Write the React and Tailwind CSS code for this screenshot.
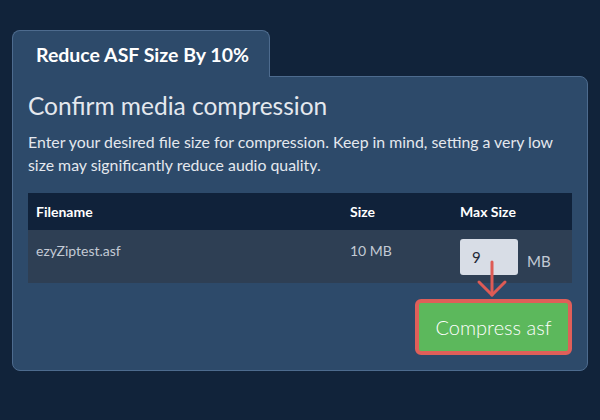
import React from "react";

const font = { fontFamily: "Lato, 'Noto Sans', sans-serif" };

const DownArrow = () => (
  <svg
    className="absolute left-[17px] top-[21px] overflow-visible"
    width="30"
    height="38"
    viewBox="0 0 30 38"
    fill="none"
    stroke="#de5b55"
    strokeWidth="3"
    strokeLinecap="round"
    strokeLinejoin="round"
  >
    <path d="M15 2 V35" />
    <path d="M2 22 L15 35 L28 22" />
  </svg>
);

export default function App() {
  return (
    <div className="min-h-screen w-[600px] h-[420px] bg-[#11233a] px-3 pt-[30px]" style={font}>
      <div className="relative z-10 -mb-px h-[47px] w-[258px] rounded-t-lg border border-b-0 border-[#4d6b8e] bg-[#2d4a6a] pl-[23px] pt-[12px]">
        <span className="block text-[19.5px] leading-6 font-bold text-white">Reduce ASF Size By 10%</span>
      </div>
      <div className="w-[576px] rounded-b-lg rounded-tr-lg border border-[#4d6b8e] bg-[#2d4a6a] px-[15px] pt-[13px] pb-[15px]">
        <h2 className="text-[24.5px] leading-8 font-normal text-[#e4e8ee]">Confirm media compression</h2>
        <p className="mt-2 text-[15.85px] leading-[23px] text-[#e4e8ee]">
          Enter your desired file size for compression. Keep in mind, setting a very low size may significantly reduce audio quality.
        </p>

        <div className="mt-[17px] text-[14px]">
          <div className="flex h-[37px] items-center bg-[#10223a] font-bold text-white">
            <div className="w-[314px] pl-2">Filename</div>
            <div className="w-[110px] pl-2">Size</div>
            <div className="flex-1 pl-2">Max Size</div>
          </div>
          <div className="flex h-[53px] items-start bg-[#2e3f54] pt-2 text-[#c3cad4]">
            <div className="w-[314px] pl-2 pt-[3px] leading-5">ezyZiptest.asf</div>
            <div className="w-[110px] pl-2 pt-[3px] leading-5">10 MB</div>
            <div className="flex flex-1 items-center gap-[9px] pl-2 pt-px">
              <div className="relative">
                <div className="flex h-9 w-[58px] items-center rounded-[3px] bg-[#d8dde6] pl-3 text-[15px] text-[#1f2937]">9</div>
                <DownArrow />
              </div>
              <span className="text-[15px] pt-2">MB</span>
            </div>
          </div>
        </div>

        <div className="mt-4 flex justify-end">
          <button className="h-14 w-[157px] rounded-md border-4 border-[#df5f59] bg-[#5cb85c] text-[20px] font-light text-white">
            Compress asf
          </button>
        </div>
      </div>
    </div>
  );
}
